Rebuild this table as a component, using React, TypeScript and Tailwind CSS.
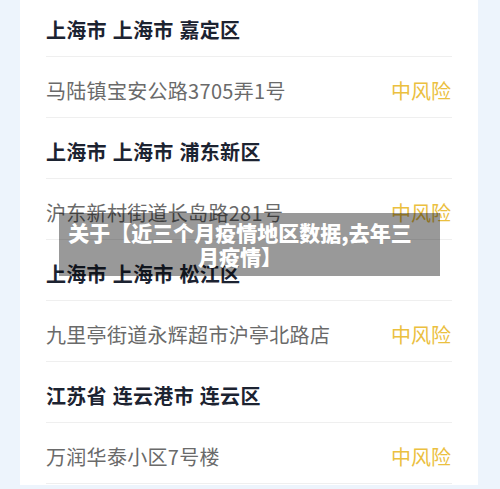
import React from "react";

type Row = { kind: "head"; text: string } | { kind: "addr"; text: string };

const rows: Row[] = [
  { kind: "head", text: "上海市 上海市 嘉定区" },
  { kind: "addr", text: "马陆镇宝安公路3705弄1号" },
  { kind: "head", text: "上海市 上海市 浦东新区" },
  { kind: "addr", text: "沪东新村街道长岛路281号" },
  { kind: "head", text: "上海市 上海市 松江区" },
  { kind: "addr", text: "九里亭街道永辉超市沪亭北路店" },
  { kind: "head", text: "江苏省 连云港市 连云区" },
  { kind: "addr", text: "万润华泰小区7号楼" },
];

export default function App() {
  return (
    <div
      className="relative w-[500px] h-[489px] overflow-hidden bg-[#edf4fc]"
      style={{ fontFamily: '"Noto Sans CJK SC", "Noto Sans", sans-serif' }}
    >
      <div className="ml-[20px] w-[458px] h-full bg-white">
        <div className="mt-[-4px] px-[26px]">
          {rows.map((r, i) => (
            <div
              key={i}
              className="h-[61px] border-b border-[#efefef] flex items-center justify-between pt-[7px]"
            >
              {r.kind === "head" ? (
                <span className="text-[20px] font-bold text-[#1c2331] leading-none tracking-[0.3px] [word-spacing:1px]">{r.text}</span>
              ) : (
                <>
                  <span className="text-[20px] text-[#6a6a6a] leading-none tracking-[0.3px]">{r.text}</span>
                  <span className="text-[20px] text-[#ebc03f] leading-none mr-[1px]">中风险</span>
                </>
              )}
            </div>
          ))}
        </div>
      </div>
      <div className="absolute left-[59px] top-[213px] w-[381px] h-[63px] bg-black/40 pl-[9px] pr-[28px] pt-[7px] text-center text-white font-black text-[21px] leading-[24px]">
        关于【近三个月疫情地区数据,去年三月疫情】
      </div>
    </div>
  );
}
